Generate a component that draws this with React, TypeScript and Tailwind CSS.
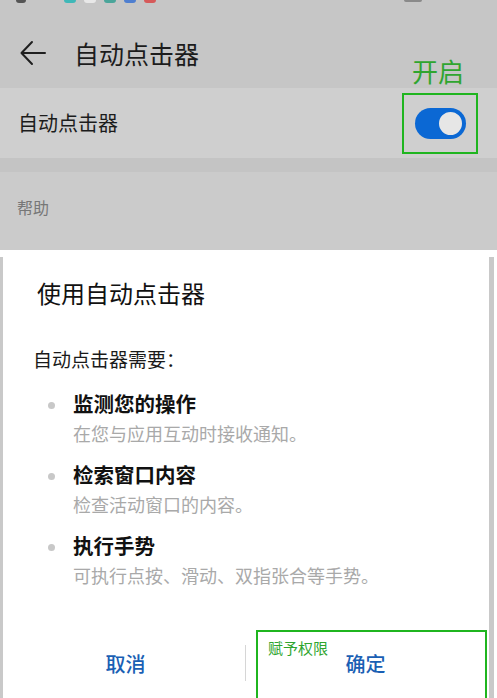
import React from "react";

const font = { fontFamily: '"Noto Sans CJK SC", "Noto Sans", sans-serif' };

const items = [
  { title: "监测您的操作", desc: "在您与应用互动时接收通知。" },
  { title: "检索窗口内容", desc: "检查活动窗口的内容。" },
  { title: "执行手势", desc: "可执行点按、滑动、双指张合等手势。" },
];

export default function App() {
  return (
    <div className="relative w-[497px] h-[698px] overflow-hidden bg-white" style={font}>
      {/* status bar remnants */}
      <div className="relative h-[88px] bg-[#c6c6c6]">
        <div className="absolute top-0 left-[16px] flex gap-[8px]">
          <span className="h-[3px] w-[10px] rounded-b bg-[#555]" />
          <span className="h-[3px] w-[12px] rounded-b bg-[#3fb8b8] ml-[30px]" />
          <span className="h-[3px] w-[12px] rounded-b bg-[#e8e8e8]" />
          <span className="h-[3px] w-[12px] rounded-b bg-[#4aa59a]" />
          <span className="h-[3px] w-[12px] rounded-b bg-[#4f7fd0]" />
          <span className="h-[3px] w-[12px] rounded-b bg-[#d65a5a]" />
        </div>
        <span className="absolute top-0 left-[404px] h-[2px] w-[18px] rounded-b bg-[#8a8a8a]" />
        <div className="flex items-center pl-[20px] pt-[37px]">
          <svg width="26" height="26" viewBox="0 0 26 26" fill="none" stroke="#1f1f1f" strokeWidth="2" strokeLinecap="round" strokeLinejoin="round">
            <path d="M25 13H2" />
            <path d="M12 2L1.5 13L12 24" />
          </svg>
          <span className="ml-[28px] text-[25px] leading-[32px] text-[#1c1c1c]">自动点击器</span>
        </div>
      </div>

      <div className="flex items-center justify-between h-[70px] bg-[#cfcfcf] pl-[18px] pr-[31px]">
        <span className="text-[20px] leading-[28px] text-[#1c1c1c]">自动点击器</span>
        <div className="relative w-[51px] h-[31px] rounded-full bg-[#0b68d4]">
          <span className="absolute right-[2px] top-[2px] w-[27px] h-[27px] rounded-full bg-[#e6e6e6] border-[2px] border-[#0b68d4]" />
        </div>
      </div>
      <div className="h-[14px] bg-[#c4c4c4]" />
      <div className="h-[78px] bg-[#cbcbcb] pl-[17px] pt-[23px]">
        <span className="text-[16px] leading-[24px] text-[#777]">帮助</span>
      </div>
      <div className="h-[7px] bg-white" />

      {/* dialog */}
      <div className="h-[441px] mr-[3px] border-l-[3px] border-r-[5px] border-[#c9c9c9] bg-white flex flex-col">
        <div className="pl-[34px] pt-[20px]">
          <div className="text-[24px] leading-[32px] text-[#111]">使用自动点击器</div>
          <div className="mt-[36px] -ml-[4px] text-[19px] leading-[28px] text-[#1a1a1a]">自动点击器需要：</div>
          <div className="mt-[16px] flex flex-col gap-[14px]">
            {items.map((it) => (
              <div key={it.title} className="flex">
                <span className="mt-[13px] ml-[11px] w-[7px] h-[7px] rounded-full bg-[#c8c8c8]" />
                <div className="ml-[18px]">
                  <div className="text-[20.5px] leading-[28px] font-bold text-[#111]">{it.title}</div>
                  <div className="mt-[3px] text-[18px] leading-[26px] text-[#a9a9a9]">{it.desc}</div>
                </div>
              </div>
            ))}
          </div>
        </div>
        <div className="mt-auto h-[68px] flex items-center relative">
          <div className="flex-1 flex justify-center pl-[3px] text-[20px] leading-[28px] text-[#1a5fb4] font-medium">取消</div>
          <span className="w-px h-[36px] bg-[#d6d6d6] mt-[-2px]" />
          <div className="flex-1 flex justify-center pr-[4px] text-[20px] leading-[28px] text-[#1a5fb4] font-medium">确定</div>
        </div>
      </div>

      {/* annotations */}
      <div className="absolute left-[412px] top-[56px] text-[26px] leading-[30px] text-[#2fa52f]">开启</div>
      <div className="absolute left-[402px] top-[93px] w-[76px] h-[61px] border-[2px] border-[#1fb51f]" />
      <div className="absolute left-[256px] top-[630px] w-[231px] h-[70px] border-[2px] border-[#1fb51f]">
        <span className="absolute left-[10px] top-[7px] text-[15px] leading-[18px] text-[#2fa52f]">赋予权限</span>
      </div>
    </div>
  );
}
